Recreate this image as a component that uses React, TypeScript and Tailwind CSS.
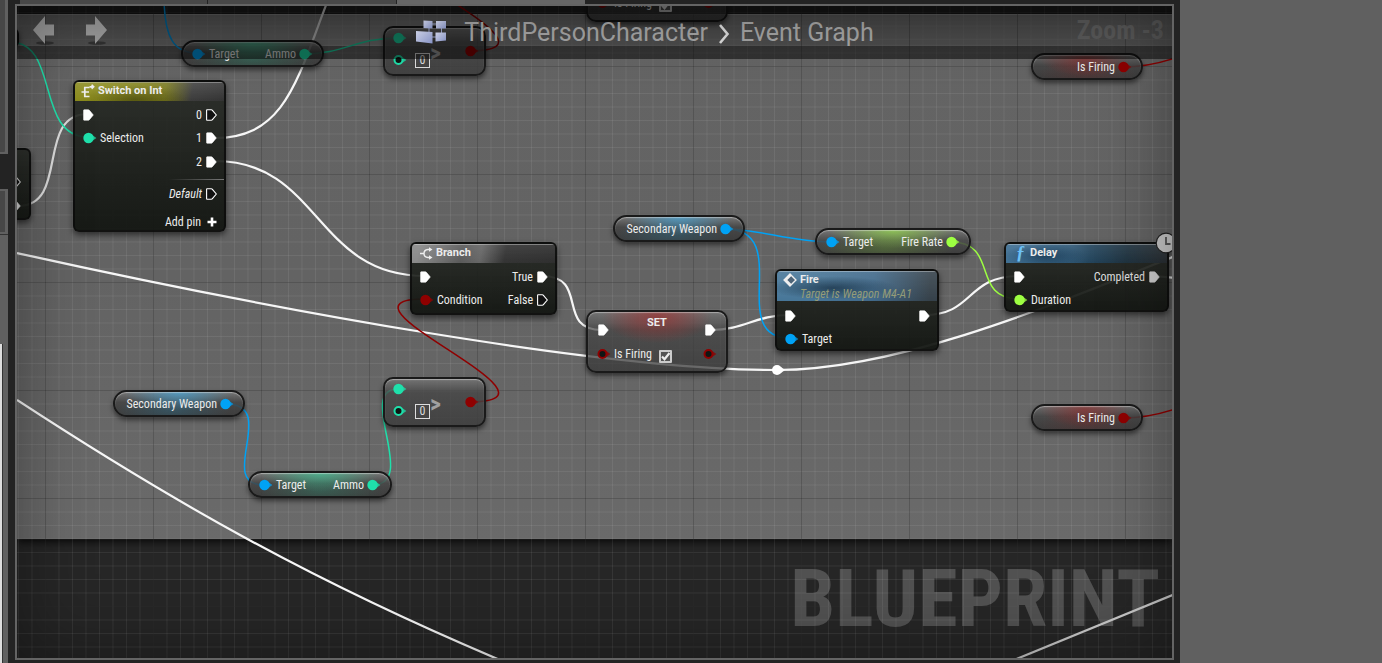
import React from "react";

const BLUE = "#00a2f5";
const TEAL = "#1fe0ab";
const RED = "#8f0000";
const LIME = "#9dff42";

function ExecPin({ hollow = false, dim = false }: { hollow?: boolean; dim?: boolean }) {
  return (
    <svg className="h-3 w-[11px] shrink-0" viewBox="0 0 11 12" aria-hidden="true">
      <path
        d="M1 .8H5.400Q6 .8 6.400 1.300L10.300 6 6.400 10.700Q6 11.200 5.400 11.200H1Q.6 11.200 .6 10.800V1.200Q.6 .8 1 .8z"
        fill={hollow ? "#111" : dim ? "#cfcfcf" : "#fff"}
        stroke={dim ? "#cfcfcf" : "#fff"}
        strokeWidth={hollow ? 1.1 : 0.6}
      />
    </svg>
  );
}

function DataPin({ color, hollow = false }: { color: string; hollow?: boolean }) {
  return (
    <svg className="h-3 w-[14px] shrink-0" viewBox="0 0 14 12" aria-hidden="true">
      <path d="M9.5 3.2 13.4 6 9.5 8.8z" fill={color} opacity={0.75} />
      {hollow ? (
        <circle cx="5.5" cy="6" r="4" fill="#101614" stroke={color} strokeWidth="2" />
      ) : (
        <circle cx="5.5" cy="6" r="5.2" fill={color} />
      )}
    </svg>
  );
}

type NodeProps = { place: string; label: string; children: React.ReactNode };

function SolidNode({ place, label, children }: NodeProps) {
  return (
    <article
      aria-label={label}
      className={`absolute overflow-hidden rounded-md border-2 border-[#0b0b0b]/80 bg-gradient-to-b from-[#272a25]/90 to-[#131612]/95 shadow-[0_3px_6px_rgba(0,0,0,0.55)] ${place}`}
    >
      {children}
    </article>
  );
}

function NodeHeader({ tint, children }: { tint: string; children: React.ReactNode }) {
  return <header className={`border-t border-white/40 ${tint}`}>{children}</header>;
}

function NodeTitle({ pad, children }: { pad: string; children: React.ReactNode }) {
  return (
    <h3 className={`flex h-4 items-center gap-[3px] font-[Roboto,sans-serif] text-[11px] font-bold ${pad}`}>
      {children}
    </h3>
  );
}

function Pill({ place, glow, label, children }: NodeProps & { glow: string }) {
  return (
    <article
      aria-label={label}
      className={`absolute flex h-[27px] items-center rounded-[14px] border-2 border-[#1a1a1a] shadow-[0_3px_5px_rgba(0,0,0,0.5),inset_0_1px_1px_rgba(255,255,255,0.4)] ${glow} ${place}`}
    >
      {children}
    </article>
  );
}

const blueGlow =
  "bg-[radial-gradient(ellipse_42%_75%_at_50%_5%,rgba(70,165,215,0.7),transparent),radial-gradient(ellipse_45%_60%_at_45%_80%,rgba(40,110,140,0.4),transparent),linear-gradient(rgba(120,120,120,0.85),rgba(66,66,66,0.85)_45%,rgba(54,54,54,0.85))]";
const tealGlow =
  "bg-[radial-gradient(ellipse_42%_75%_at_50%_5%,rgba(60,200,150,0.65),transparent),radial-gradient(ellipse_45%_60%_at_50%_80%,rgba(40,140,110,0.35),transparent),linear-gradient(rgba(120,120,120,0.85),rgba(66,66,66,0.85)_45%,rgba(54,54,54,0.85))]";
const limeGlow =
  "bg-[radial-gradient(ellipse_42%_75%_at_50%_5%,rgba(150,220,75,0.7),transparent),radial-gradient(ellipse_45%_60%_at_45%_80%,rgba(90,130,50,0.5),transparent),linear-gradient(rgba(120,120,120,0.85),rgba(72,72,72,0.85)_45%,rgba(56,56,56,0.85))]";
const redGlow =
  "bg-[radial-gradient(ellipse_42%_75%_at_48%_15%,rgba(150,40,40,0.6),transparent),radial-gradient(ellipse_45%_60%_at_50%_80%,rgba(110,40,40,0.35),transparent),linear-gradient(rgba(110,110,110,0.85),rgba(66,66,66,0.85)_45%,rgba(54,54,54,0.85))]";

function SecondaryWeapon({ place }: { place: string }) {
  return (
    <Pill place={`w-[132px] justify-end gap-[3px] pr-[9px] ${place}`} glow={blueGlow} label="Secondary Weapon">
      <span>Secondary Weapon</span>
      <DataPin color={BLUE} />
    </Pill>
  );
}

function TargetPill({ place, glow, out, color }: { place: string; glow: string; out: string; color: string }) {
  return (
    <Pill place={`justify-between pr-[9px] pl-[9px] ${place}`} glow={glow} label={out}>
      <span className="flex items-center gap-[3px]">
        <DataPin color={BLUE} />
        Target
      </span>
      <span className="flex items-center gap-[3px]">
        {out}
        <DataPin color={color} />
      </span>
    </Pill>
  );
}

function IsFiring({ place }: { place: string }) {
  return (
    <Pill place={`w-28 justify-end gap-[3px] pr-[9px] ${place}`} glow={redGlow} label="Is Firing">
      <span>Is Firing</span>
      <DataPin color={RED} />
    </Pill>
  );
}

const glass =
  "rounded-[10px] border-2 border-[#1a1a1a] shadow-[0_3px_5px_rgba(0,0,0,0.5),inset_0_1px_1px_rgba(255,255,255,0.4)]";

function CompareNode({ place }: { place: string }) {
  return (
    <article
      aria-label="Greater than"
      className={`absolute flex h-[50px] w-[103px] justify-between bg-gradient-to-b from-[#777]/80 via-[#454545]/80 via-30% to-[#3c3c3c]/85 pr-[6px] pl-2 ${glass} ${place}`}
    >
      <div className="flex flex-col gap-[10px] pt-1">
        <DataPin color={TEAL} />
        <div className="flex h-3 items-center gap-2">
          <DataPin color={TEAL} hollow />
          <input
            aria-label="Value"
            defaultValue="0"
            className="h-[15px] w-[15px] border border-[#ddd] bg-transparent text-center text-[12px] leading-3 text-[#ddd] outline-none"
          />
        </div>
      </div>
      <span className="mr-6 self-center pt-[3px] text-2xl leading-5 font-bold text-[#a0a0a0]">&gt;</span>
      <span className="flex items-center">
        <DataPin color={RED} />
      </span>
    </article>
  );
}

function SetNode({ place, id }: { place: string; id: string }) {
  return (
    <article
      aria-label="Set Is Firing"
      className={`absolute h-[63px] w-[142px] bg-[radial-gradient(ellipse_40%_45%_at_50%_8%,rgba(170,40,40,0.6),transparent),linear-gradient(rgba(120,120,120,0.7),rgba(66,66,66,0.7)_30%,rgba(54,54,54,0.75))] ${glass} ${place}`}
    >
      <h3 className="pt-1 text-center font-[Roboto,sans-serif] text-[11px] leading-[14px] font-bold">SET</h3>
      <div className="flex h-0 items-center justify-between px-[10px]">
        <ExecPin />
        <ExecPin />
      </div>
      <div className="flex h-12 items-center justify-between px-[9px]">
        <span className="flex items-center gap-[3px]">
          <DataPin color={RED} hollow />
          <label htmlFor={id}>Is Firing</label>
          <span className="relative ml-1 flex pt-1">
            <input
              id={id}
              type="checkbox"
              defaultChecked
              className="peer h-[13px] w-[13px] appearance-none rounded-[1px] border-2 border-[#ccc] bg-[#555]"
            />
            <svg
              className="pointer-events-none absolute bottom-0 left-0 h-[13px] w-[13px] opacity-0 peer-checked:opacity-100"
              viewBox="0 0 13 13"
              aria-hidden="true"
            >
              <path d="M3 6.5 5.5 9.2 10.5 3" fill="none" stroke="#eee" strokeWidth="2.2" />
            </svg>
          </span>
        </span>
        <DataPin color={RED} hollow />
      </div>
    </article>
  );
}

function Wires() {
  return (
    <svg className="absolute top-0 left-0 h-px w-px overflow-visible" fill="none" aria-hidden="true">
      <g stroke="#f6f6f6" strokeWidth="2.2">
        <path d="M18 206C70 206 35 114 88 114" stroke="#ddd" />
        <path d="M215 138C285 138 297 80 328 0" />
        <path d="M215 161C320 161 315 276 425 276" />
        <path d="M17 253C270 309 600 370 777 370C890 370 1030 315 1175 256" />
        <path d="M17 400C170 500 310 580 500 660" />
        <path d="M1014 660 1175 594" stroke="#ccc" />
        <path d="M542 276C590 276 555 330 602 330" />
        <path d="M711 330C745 330 755 315 790 315" />
        <path d="M924 315C975 315 965 276 1020 276" />
        <path d="M1154 276 1175 278" />
      </g>
      <g strokeWidth="1.5">
        <g stroke={TEAL}>
          <path d="M10 42C60 42 35 137 88 137" />
          <path d="M304 54C345 54 355 38 398 38" />
          <path d="M372 485C420 485 355 389 398 389" />
        </g>
        <g stroke={BLUE}>
          <path d="M164 -5C164 40 175 53 197 53" />
          <path d="M725 229C760 229 790 242 832 242" />
          <path d="M725 229C795 229 725 338 790 338" />
          <path d="M226 404C280 404 215 485 264 485" />
        </g>
        <g stroke={RED}>
          <path d="M469 402C585 402 315 299 425 299" />
          <path d="M469 51C585 51 315 -52 425 -52" />
          <path d="M1123 67C1145 67 1160 63 1175 58" />
          <path d="M1123 418C1145 418 1160 414 1175 409" />
        </g>
        <path d="M951 242C1000 242 970 299 1019 299" stroke={LIME} />
      </g>
      <circle cx="777" cy="370" r="5" fill="#fff" />
      <path d="M781 367 785 370 781 373z" fill="#fff" />
    </svg>
  );
}

const minorGrid =
  "bg-[linear-gradient(rgba(255,255,255,0.07)_1px,transparent_1px),linear-gradient(90deg,rgba(255,255,255,0.07)_1px,transparent_1px)] bg-[size:13.5px_13.5px] bg-[position:28px_60px]";
const majorGrid =
  "bg-[linear-gradient(rgba(0,0,0,0.24)_1px,transparent_1px),linear-gradient(90deg,rgba(0,0,0,0.24)_1px,transparent_1px)] bg-[size:108px_108px] bg-[position:28px_60px]";

function Graph() {
  return (
    <div className="absolute -top-[6px] -left-[17px]">
      <Wires />

      <SolidNode place="-left-[40px] top-[148px] h-[72px] w-[71px]" label="Sequence">
        <div className="flex flex-col items-end gap-3 pt-[26px] pr-2">
          <ExecPin hollow dim />
          <ExecPin dim />
        </div>
      </SolidNode>
      <SolidNode place="-left-[40px] top-[28px] h-5 w-[59px]" label="Variable">
        <span />
      </SolidNode>

      <SolidNode place="left-[73px] top-[80px] h-[152px] w-[153px]" label="Switch on Int">
        <NodeHeader tint="h-[19px] bg-[linear-gradient(rgba(255,255,255,0.12),transparent),radial-gradient(ellipse_35%_80%_at_40%_90%,rgba(60,60,10,0.6),transparent),linear-gradient(100deg,#8b8b1c_15%,#7f7f1a_45%,#77771c_60%,#3b3b3b_78%,#333)]">
          <NodeTitle pad="pl-[6px]">
            <svg className="h-[14px] w-[14px]" viewBox="0 0 14 14" fill="none" stroke="#eee" strokeWidth="1.700" aria-hidden="true">
              <path d="M8.500 3.500H3.800V12.500H8.500M0.500 8H8" />
              <path d="M8.500 2.800H11" />
              <path d="M11 0 13.800 2.800 11 5.600 9.800 2.800z" fill="#eee" stroke="none" />
            </svg>
            Switch on Int
          </NodeTitle>
        </NodeHeader>
        <div className="flex justify-between pt-[2px] pr-[7px] pl-2">
          <div>
            <div className="flex h-[23px] items-center">
              <ExecPin />
            </div>
            <div className="flex h-[23px] items-center gap-[3px]">
              <DataPin color={TEAL} />
              Selection
            </div>
          </div>
          <div>
            <div className="flex h-[23px] items-center justify-end gap-1">
              0<ExecPin hollow />
            </div>
            <div className="flex h-6 items-center justify-end gap-1">
              1<ExecPin />
            </div>
            <div className="flex h-[23px] items-center justify-end gap-1">
              2<ExecPin />
            </div>
          </div>
        </div>
        <div className="mt-[6px] ml-auto h-px w-14 bg-gradient-to-r from-transparent to-[#777]" />
        <div className="mt-[2px] flex h-6 items-center justify-end gap-1 pr-[7px] italic">
          Default
          <ExecPin hollow />
        </div>
        <button type="button" className="mt-1 ml-auto flex h-6 items-center gap-[6px] pr-[7px]">
          Add pin
          <svg className="h-[10px] w-[10px]" viewBox="0 0 10 10" aria-hidden="true">
            <path d="M3.7 0.5h2.6v3.2h3.2v2.6H6.3v3.2H3.7V6.3H.5V3.7h3.2z" fill="#fff" />
          </svg>
        </button>
      </SolidNode>

      <SolidNode place="left-[410px] top-[242px] h-[73px] w-[147px]" label="Branch">
        <NodeHeader tint="h-[19px] bg-[linear-gradient(rgba(255,255,255,0.08),transparent),linear-gradient(100deg,#8a8a8a_5%,#5a5a5a_35%,#666_48%,#333_65%,#2e2e2e)]">
          <NodeTitle pad="pl-2">
            <svg className="h-[13px] w-[13px]" viewBox="0 0 13 13" fill="none" stroke="#eee" strokeWidth="1.4" aria-hidden="true">
              <path d="M0 6.500H4M10 2.500H8Q4 2.800 4 6.500T8 10.500H10" />
              <path d="M9 .2 12.500 2.500 9 4.800zM9 8.200 12.500 10.500 9 12.800z" fill="#eee" stroke="none" />
            </svg>
            Branch
          </NodeTitle>
        </NodeHeader>
        <div className="flex justify-between pt-[2px] pr-[7px] pl-2">
          <div>
            <div className="flex h-[23px] items-center">
              <ExecPin />
            </div>
            <div className="flex h-[23px] items-center gap-[3px]">
              <DataPin color={RED} />
              Condition
            </div>
          </div>
          <div>
            <div className="flex h-[23px] items-center justify-end gap-1">
              True
              <ExecPin />
            </div>
            <div className="flex h-6 items-center justify-end gap-1">
              False
              <ExecPin hollow />
            </div>
          </div>
        </div>
      </SolidNode>

      <SolidNode place="left-[775px] top-[269px] h-[82px] w-[164px]" label="Fire">
        <NodeHeader tint="h-[30px] bg-[radial-gradient(ellipse_40%_40%_at_35%_55%,rgba(25,50,70,0.75),transparent),linear-gradient(rgba(255,255,255,0.1),transparent),linear-gradient(95deg,#477698_20%,#41698a_60%,#35414a_95%)]">
          <NodeTitle pad="pl-[6px]">
            <svg className="h-[14px] w-[14px]" viewBox="0 0 13 13" fill="none" aria-hidden="true">
              <path d="M6.5 1 12 6.5 6.5 12 1 6.5z" fill="#4d6478" stroke="#eee" strokeWidth="1.3" />
              <path d="M1 6.5 6.5 1 8 2.5 4 6.5 8 10.5 6.5 12z" fill="#eee" />
            </svg>
            Fire
          </NodeTitle>
          <p className="pl-[23px] leading-[13px] text-[#949c78] italic">Target is Weapon M4-A1</p>
        </NodeHeader>
        <div className="flex justify-between pt-[3px] pr-[7px] pl-2">
          <div>
            <div className="flex h-[23px] items-center">
              <ExecPin />
            </div>
            <div className="flex h-[23px] items-center gap-[3px]">
              <DataPin color={BLUE} />
              Target
            </div>
          </div>
          <div className="flex h-[23px] items-center">
            <ExecPin />
          </div>
        </div>
      </SolidNode>

      <SolidNode place="left-[1004px] top-[242px] h-[70px] w-[165px]" label="Delay">
        <NodeHeader tint="h-[19px] bg-[radial-gradient(ellipse_25%_70%_at_24%_60%,rgba(20,50,75,0.7),transparent),linear-gradient(rgba(255,255,255,0.08),transparent),linear-gradient(100deg,#3f6f93_15%,#315a78_40%,#23455d_52%,#1f3340_75%,#2a2f33)]">
          <NodeTitle pad="pl-[10px]">
            <span className="w-[11px] font-['Liberation_Serif',serif] text-lg leading-4 font-bold text-[#6cc0f5] italic">
              ƒ
            </span>
            Delay
          </NodeTitle>
        </NodeHeader>
        <div className="flex justify-between pt-[2px] pr-[7px] pl-2">
          <div>
            <div className="flex h-[23px] items-center">
              <ExecPin />
            </div>
            <div className="flex h-[23px] items-center gap-[3px]">
              <DataPin color={LIME} />
              Duration
            </div>
          </div>
          <div className="flex h-[23px] items-center gap-1 text-[#ddd]">
            Completed
            <ExecPin dim />
          </div>
        </div>
      </SolidNode>
      <svg className="absolute top-[232px] left-[1155px] h-[22px] w-[22px]" viewBox="0 0 22 22" aria-hidden="true">
        <circle cx="11" cy="11" r="9.8" fill="#c9c9c9" stroke="#222" strokeWidth="1.2" />
        <path d="M11 5V12H15.5" fill="none" stroke="#555" strokeWidth="1.8" />
      </svg>

      <SetNode place="left-[586px] top-[310px]" id="firing-main" />
      <SetNode place="left-[586px] -top-[41px]" id="firing-upper" />
      <CompareNode place="left-[383px] top-[377px]" />
      <CompareNode place="left-[383px] top-[26px]" />
      <SecondaryWeapon place="left-[613px] top-[215px]" />
      <SecondaryWeapon place="left-[113px] top-[390px]" />
      <TargetPill place="left-[815px] top-[228px] w-[156px]" glow={limeGlow} out="Fire Rate" color={LIME} />
      <TargetPill place="left-[248px] top-[471px] w-36" glow={tealGlow} out="Ammo" color={TEAL} />
      <TargetPill place="left-[181px] top-[40px] w-[143px]" glow={tealGlow} out="Ammo" color={TEAL} />
      <IsFiring place="left-[1031px] top-[53px]" />
      <IsFiring place="left-[1031px] top-[404px]" />
    </div>
  );
}

function NavArrow({ label, flip = false }: { label: string; flip?: boolean }) {
  return (
    <button type="button" aria-label={label} className="flex h-8 w-[52px] items-center justify-center">
      <svg className="h-8 w-6" viewBox="0 0 24 32" aria-hidden="true">
        <ellipse cx="13" cy="29" rx="9" ry="1.8" fill="#000" opacity="0.35" />
        <path d={flip ? "M2 10.500H11V2L23 16 11 30V21.500H2z" : "M22 10.500H13V2L1 16 13 30V21.500H22z"} fill="#9b9b9b" />
      </svg>
    </button>
  );
}

function GraphTitleBar() {
  return (
    <header className="absolute inset-x-0 top-0 flex h-[53px] items-start bg-black/50 text-[25px] text-[#a6a6a6]">
      <nav aria-label="History" className="flex pt-2 pl-px">
        <NavArrow label="Back" />
        <NavArrow label="Forward" flip />
      </nav>
      <nav
        aria-label="Breadcrumb"
        className="flex flex-1 items-start justify-center gap-4 pt-[13px] pr-1 font-[Roboto,sans-serif]"
      >
        <svg className="h-7 w-8" viewBox="0 0 32 28" aria-hidden="true">
          <defs>
            <linearGradient id="tile" x1="0" y1="0" x2="1" y2="1">
              <stop offset="0" stopColor="#dfe4fb" />
              <stop offset="1" stopColor="#8e9bd0" />
            </linearGradient>
          </defs>
          <path d="M12 5H24M25.500 7V15M13 7V13M16 18H22" stroke="#9aa2c8" strokeWidth="1" />
          <g fill="url(#tile)">
            <path d="M7.500 1.500 16.500 2V9.500L7.500 9z" />
            <path d="M20 2 30 2V9.500L20 9.500z" />
            <path d="M0 12 16.500 13V24.500L0 22.500z" />
            <path d="M19.500 13.500 30 13.500V21.500L19.500 22.500z" />
          </g>
        </svg>
        <div className="flex items-center gap-[10px] leading-7">
          <a href="#character">ThirdPersonCharacter</a>
          <svg className="h-[22px] w-3" viewBox="0 0 12 22" fill="none" aria-hidden="true">
            <path d="M2 3 9.500 12 2 21" stroke="#ddd" strokeWidth="2.600" />
          </svg>
          <span>Event Graph</span>
        </div>
      </nav>
      <span className="absolute top-[10px] right-2 text-[26px] leading-7 font-bold text-[#595959]">Zoom -3</span>
    </header>
  );
}

export default function App() {
  return (
    <div className="flex h-screen overflow-hidden bg-[#606060] font-['Roboto_Condensed',Roboto,sans-serif] text-[12px] leading-4 text-[#ececec]">
      <aside aria-label="Side panels" className="flex w-2 shrink-0 flex-col">
        <div className="h-[154px] rounded-br border-r-[3px] border-b-2 border-[#606060] bg-[#474747]" />
        <div className="h-[35px] bg-[#232323]" />
        <div className="h-[45px] border-t-2 border-r-[3px] border-b-2 border-[#606060] bg-[#474747]" />
        <div className="h-[110px] border-t border-[#333]" />
        <div className="w-[3px] flex-1 border-r border-[#333] bg-[#ddd]" />
      </aside>

      <main className="flex min-w-0 flex-1 flex-col bg-[#232323] pr-[6px] pb-[3px] pl-[7px]">
        <div className="flex h-1 shrink-0 gap-px pl-[5px]" aria-hidden="true">
          <div className="w-[187px] bg-[#484848]" />
          <div className="w-[188px] bg-[#484848]" />
          <div className="w-[188px] bg-[#666]" />
        </div>
        <section
          aria-label="Event Graph"
          className="relative flex-1 overflow-hidden border-2 border-[#646464] bg-[#262626]"
        >
          <div className="absolute inset-x-0 top-2 h-[525px] bg-gradient-to-b from-[#646464] via-[#636363] to-[#6a6a6a] shadow-[0_3px_8px_rgba(0,0,0,0.8)]">
            <div className="h-8 border-y border-[#a0a0a0] bg-gradient-to-b from-[#868686] to-[#989898]" />
          </div>
          <div className={`absolute inset-0 ${minorGrid}`} />
          <div className={`absolute inset-0 ${majorGrid}`} />
          <p className="absolute right-3 bottom-[14px] text-[80px] leading-[90px] font-bold text-white/20 select-none">
            BLUEPRINT
          </p>
          <Graph />
          <GraphTitleBar />
          <div className="pointer-events-none absolute inset-0 shadow-[inset_0_0_70px_rgba(0,0,0,0.4)]" />
        </section>
      </main>

      <aside aria-label="Empty panel" className="w-[202px] shrink-0" />
    </div>
  );
}
